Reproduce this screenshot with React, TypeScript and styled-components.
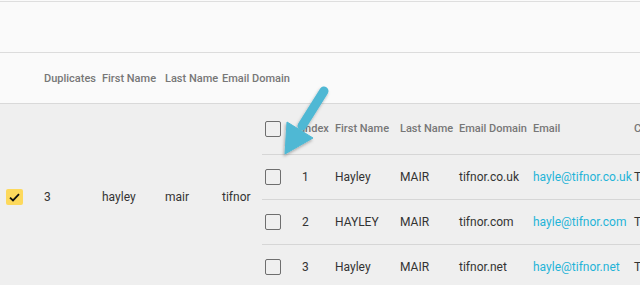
import React from 'react';
import styled, { createGlobalStyle } from 'styled-components';

const GlobalStyle = createGlobalStyle`
  html, body {
    margin: 0;
    padding: 0;
    background: #fafafa;
    font-family: Roboto, "Liberation Sans", Arial, sans-serif;
    overflow: hidden;
  }
`;

type NestedRow = {
  index: number;
  first: string;
  last: string;
  domain: string;
  email: string;
  extra: string;
};

const nestedRows: NestedRow[] = [
  { index: 1, first: 'Hayley', last: 'MAIR', domain: 'tifnor.co.uk', email: 'hayle@tifnor.co.uk', extra: 'T' },
  { index: 2, first: 'HAYLEY', last: 'MAIR', domain: 'tifnor.com', email: 'hayle@tifnor.com', extra: 'T' },
  { index: 3, first: 'Hayley', last: 'MAIR', domain: 'tifnor.net', email: 'hayle@tifnor.net', extra: 'T' },
];

function App() {
  return (
    <Page>
      <GlobalStyle />
      <Toolbar />
      <OuterHead>
        <span />
        <HeadCell>Duplicates</HeadCell>
        <HeadCell>First Name</HeadCell>
        <HeadCell>Last Name</HeadCell>
        <HeadCell>Email Domain</HeadCell>
      </OuterHead>
      <OuterRow>
        <SelectCell>
          <YellowCheck>
            <svg width='11' height='9' viewBox='0 0 11 9'>
              <path d='M1 4.6 L4 7.4 L10 1.2' fill='none' stroke='#111' strokeWidth='1.8' />
            </svg>
          </YellowCheck>
        </SelectCell>
        <BodyCell>3</BodyCell>
        <BodyCell>hayley</BodyCell>
        <BodyCell>mair</BodyCell>
        <BodyCell>tifnor</BodyCell>
        <Nested>
          <NestedHead>
            <BoxCell>
              <Box />
            </BoxCell>
            <HeadCell $pad={7}>Index</HeadCell>
            <HeadCell $pad={7}>First Name</HeadCell>
            <HeadCell $pad={7}>Last Name</HeadCell>
            <HeadCell $pad={7}>Email Domain</HeadCell>
            <HeadCell $pad={7}>Email</HeadCell>
            <HeadCell $pad={7}>Company</HeadCell>
          </NestedHead>
          {nestedRows.map((row) => (
            <NestedRowLine key={row.index}>
              <BoxCell>
                <Box />
              </BoxCell>
              <BodyCell $pad={7}>{row.index}</BodyCell>
              <BodyCell $pad={7}>{row.first}</BodyCell>
              <BodyCell $pad={7}>{row.last}</BodyCell>
              <BodyCell $pad={7}>{row.domain}</BodyCell>
              <BodyCell $pad={7} $link>{row.email}</BodyCell>
              <BodyCell $pad={7}>{row.extra}</BodyCell>
            </NestedRowLine>
          ))}
        </Nested>
      </OuterRow>
      <Arrow width='640' height='285' viewBox='0 0 640 285'>
        <defs>
          <filter id='arrowShadow' x='-20%' y='-20%' width='140%' height='140%'>
            <feDropShadow dx='-1' dy='2' stdDeviation='1.6' floodColor='#000' floodOpacity='0.3' />
          </filter>
        </defs>
        <g filter='url(#arrowShadow)' fill='#4fb8d4' stroke='#4fb8d4'>
          <line x1='324' y1='91' x2='302' y2='126' strokeWidth='9' strokeLinecap='round' />
          <polygon points='287,122 313,138 285,154' strokeWidth='1' strokeLinejoin='round' />
        </g>
      </Arrow>
    </Page>
  );
}

export default App;

const Page = styled.div`
  position: relative;
  width: 640px;
  height: 285px;
  padding-top: 1px;
  box-sizing: border-box;
  overflow: hidden;
`;

const Toolbar = styled.div`
  height: 50px;
  border-top: 1px solid #dedede;
  border-bottom: 1px solid #dcdcdc;
  background: #fafafa;
`;

const outerColumns = '36px 58px 63px 57px 48px 1fr';

const OuterHead = styled.div`
  display: grid;
  grid-template-columns: ${outerColumns};
  align-items: center;
  height: 50px;
  border-bottom: 1px solid #d9d9d9;
  background: #fafafa;
`;

const HeadCell = styled.div<{ $pad?: number }>`
  padding-left: ${(p) => p.$pad ?? 8}px;
  font-size: 11px;
  font-weight: 500;
  color: #777;
  white-space: nowrap;
  overflow: visible;
`;

const OuterRow = styled.div`
  display: grid;
  grid-template-columns: ${outerColumns};
  align-items: center;
  background: #efefef;
`;

const SelectCell = styled.div`
  padding-left: 6px;
  display: flex;
  align-items: center;
`;

const YellowCheck = styled.div`
  width: 17px;
  height: 16px;
  border-radius: 2px;
  background: #fdd95c;
  display: flex;
  align-items: center;
  justify-content: center;
`;

const BodyCell = styled.div<{ $pad?: number; $link?: boolean }>`
  padding-left: ${(p) => p.$pad ?? 8}px;
  font-size: 12px;
  color: ${(p) => (p.$link ? '#1fb4d8' : '#333')};
  white-space: nowrap;
  overflow: visible;
`;

const nestedColumns = '33px 33px 65px 59px 74px 101px 1fr';

const Nested = styled.div`
  display: flex;
  flex-direction: column;
`;

const NestedHead = styled.div`
  display: grid;
  grid-template-columns: ${nestedColumns};
  align-items: center;
  height: 51px;
  padding-bottom: 1px;
  box-sizing: border-box;
  border-bottom: 1px solid #d6d6d6;
`;

const NestedRowLine = styled.div`
  display: grid;
  grid-template-columns: ${nestedColumns};
  align-items: center;
  height: 45px;
  border-bottom: 1px solid #d6d6d6;
  box-sizing: border-box;
`;

const BoxCell = styled.div`
  padding-left: 3px;
  display: flex;
  align-items: center;
`;

const Box = styled.div`
  width: 16px;
  height: 16px;
  box-sizing: border-box;
  border: 1.5px solid #6e6e6e;
  border-radius: 2px;
`;

const Arrow = styled.svg`
  position: absolute;
  left: 0;
  top: 0;
  pointer-events: none;
`;
